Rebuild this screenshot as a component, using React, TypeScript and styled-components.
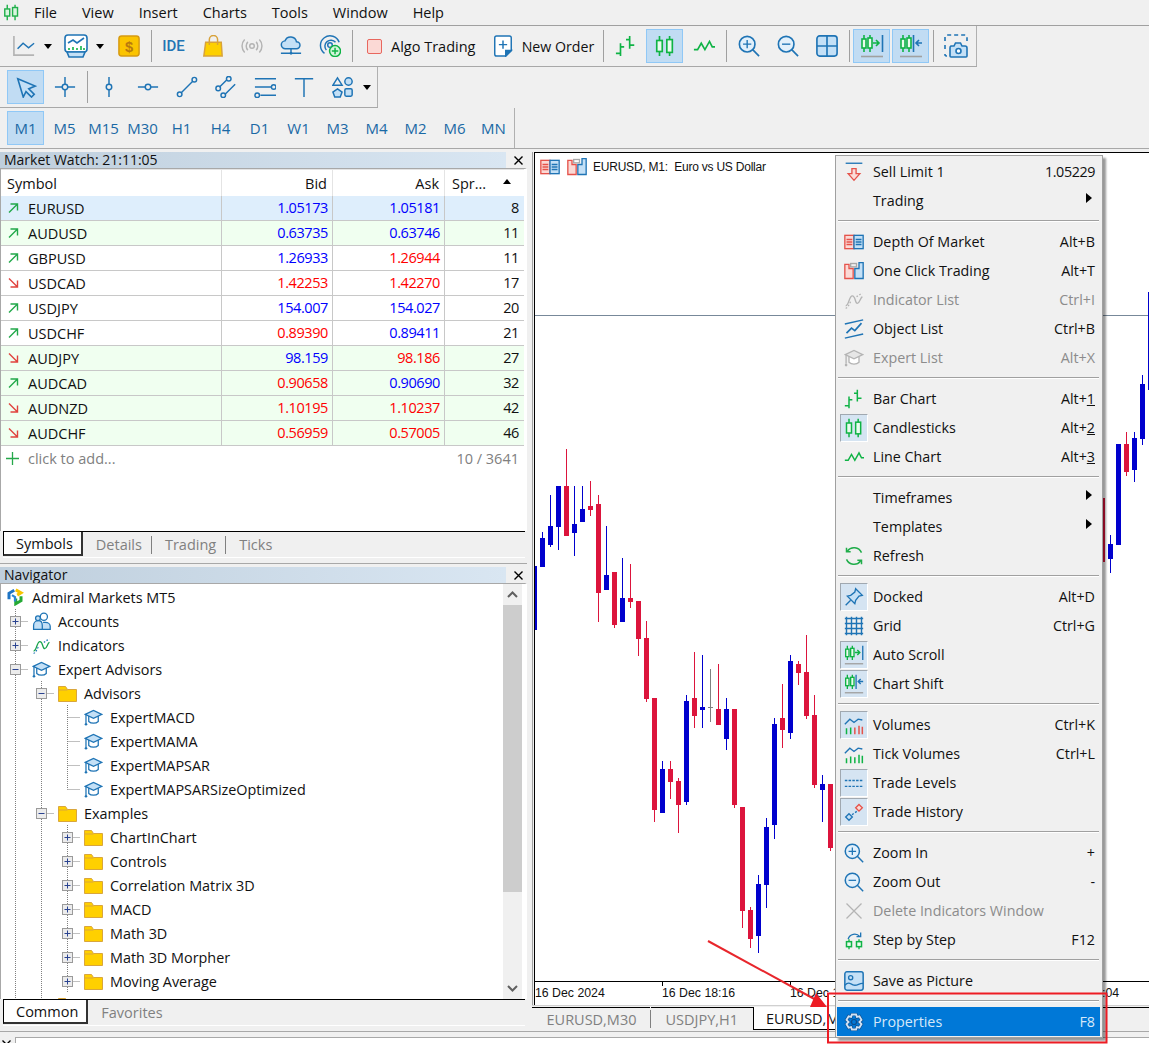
import React, { ReactNode } from 'react';
import styled, { createGlobalStyle } from 'styled-components';

const B = '#1f74b5';
const L = '#c4e0f6';
const G = '#0fb345';
const R = '#e5534b';
const GY = '#b4b4b4';
const FONT = `'Open Sans', 'Noto Sans', sans-serif`;

const GlobalStyle = createGlobalStyle`
    html, body { margin: 0; padding: 0; background: #fff; }
    body { font-family: ${FONT}; font-size: 14.5px; color: #111; }
`;

const Page = styled.div`
    position: relative;
    width: 1149px;
    height: 1064px;
    overflow: hidden;
    background: #fff;
`;

const Frame = styled.div`
    display: flex;
    flex-direction: column;
    height: 1043px;
    background: #f0f0f0;
`;

const MenuBar = styled.div`
    display: flex;
    align-items: center;
    height: 25px;
    padding-left: 3px;
    border-bottom: 1px solid #a0a0a0;
    box-sizing: content-box;
`;

const MenuLabels = styled.div`
    display: flex;
    gap: 25px;
    margin-left: 14px;
`;

const Toolbar = styled.div<{ $w: number; $pad: number }>`
    display: flex;
    align-items: center;
    width: ${(p) => p.$w}px;
    height: 40px;
    padding-left: ${(p) => p.$pad}px;
    box-sizing: border-box;
    border-right: 1px solid #b0b0b0;
    flex: none;
`;

const ToolRow = styled.div<{ $full?: boolean }>`
    border-bottom: 1px solid #a8a8a8;
    ${(p) => (p.$full ? '' : 'width: fit-content;')}
`;

const ToolButton = styled.div<{ $active?: boolean; $w?: number }>`
    display: flex;
    align-items: center;
    justify-content: center;
    gap: 8px;
    flex: none;
    width: ${(p) => p.$w ?? 37}px;
    height: 34px;
    margin: 0 1px;
    box-sizing: border-box;
    font-size: 14.2px;
    color: #111;
    background: ${(p) => (p.$active ? '#c1dcf3' : 'transparent')};
    border: 1px solid ${(p) => (p.$active ? '#90c8f6' : 'transparent')};
`;

const AlgoButton = styled(ToolButton)`
    justify-content: flex-start;
    gap: 9px;
    padding-left: 10px;
    font-size: 14.5px;
`;

const TimeframeButton = styled(ToolButton)`
    font-size: 15px;
    color: #1a69a5;
`;

const IdeLabel = styled.span`
    font-family: Roboto, sans-serif;
    font-weight: 500;
    font-size: 15px;
    color: #2374b4;
`;

const AlgoBox = styled.span`
    flex: none;
    width: 15px;
    height: 15px;
    box-sizing: border-box;
    border: 1px solid #e8675e;
    border-radius: 2px;
    background: #fbd9d5;
`;

const ToolSep = styled.div<{ $tight?: boolean }>`
    flex: none;
    width: 1px;
    height: 32px;
    margin: 0 ${(p) => (p.$tight ? '1px' : '2px')} 0 3px;
    background: #a0a0a0;
`;

const Caret = styled.div<{ $w: number }>`
    flex: none;
    width: ${(p) => p.$w}px;
    padding-left: 1px;
    box-sizing: border-box;
    &::before {
        content: '';
        display: block;
        width: 0;
        height: 0;
        border-left: 4.5px solid transparent;
        border-right: 4.5px solid transparent;
        border-top: 5px solid #000;
    }
`;

const Main = styled.div`
    display: flex;
    height: 882px;
    border-bottom: 1px solid #a8a8a8;
    flex: none;
`;

const LeftColumn = styled.div`
    width: 527px;
    padding-top: 3px;
    box-sizing: border-box;
    flex: none;
`;

const TitleBar = styled.div`
    display: flex;
    height: 16px;
`;

const TitleFill = styled.div`
    width: 506px;
    padding-left: 4px;
    box-sizing: border-box;
    line-height: 16px;
    font-size: 14px;
    background: linear-gradient(to right, #bfcfdd, #d9e6f2);
`;

const TitleClose = styled.div`
    flex: 1;
    display: flex;
    align-items: center;
    justify-content: center;
    padding-left: 3px;
`;

const WatchPanel = styled.div`
    height: 362px;
    box-sizing: content-box;
    border-top: 1px solid #a8a8a8;
    border-left: 1px solid #a8a8a8;
    border-right: 2px solid #fff;
    background: #fff;
    width: 524px;
`;

const watchColumns = '221px 111px 112px 79px';

const HeaderRow = styled.div`
    display: grid;
    grid-template-columns: ${watchColumns};
    height: 27px;
    align-items: stretch;
`;

const HeaderCell = styled.div<{ $right?: boolean }>`
    display: flex;
    align-items: center;
    justify-content: ${(p) => (p.$right ? 'flex-end' : 'flex-start')};
    padding: 0 5px 0 6px;
    border-right: 1px solid #e4e4e4;
    border-top: 1px solid #e4e4e4;
`;

const SpreadHeader = styled(HeaderCell)`
    justify-content: space-between;
    padding: 0 13px 0 7px;
    border-right: 0;
`;

const SortCaret = styled.div`
    width: 0;
    height: 0;
    margin-bottom: 3px;
    border-left: 4.5px solid transparent;
    border-right: 4.5px solid transparent;
    border-bottom: 5px solid #000;
`;

const QuoteRow = styled.div<{ $bg: string }>`
    display: grid;
    grid-template-columns: ${watchColumns};
    width: 523px;
    height: 25px;
    box-sizing: border-box;
    background: ${(p) => p.$bg};
    border-bottom: 1px solid #c8c8c8;
`;

const SymbolCell = styled.div`
    display: flex;
    align-items: center;
    gap: 9px;
    padding-left: 6px;
    border-right: 1px solid #c8c8c8;
`;

const PriceCell = styled.div<{ $color?: string; $last?: boolean }>`
    text-align: right;
    line-height: 24px;
    padding-right: 4px;
    letter-spacing: -0.4px;
    color: ${(p) => p.$color ?? '#111'};
    ${(p) => (p.$last ? 'padding-right: 5px;' : 'border-right: 1px solid #c8c8c8;')}
`;

const AddRow = styled.div`
    display: flex;
    align-items: center;
    justify-content: space-between;
    width: 523px;
    height: 25px;
    box-sizing: border-box;
    padding: 0 5px;
    color: #808080;
`;

const AddLabel = styled.span`
    display: flex;
    align-items: center;
    gap: 9px;
`;

const PaneTabs = styled.div`
    display: flex;
    height: 25px;
    margin-left: 3px;
    margin-right: 2px;
    border-top: 1px solid #000;
    border-bottom: 1px solid #fff;
    box-sizing: content-box;
`;

const PaneTab = styled.div<{ $active?: boolean }>`
    display: flex;
    align-items: center;
    padding: ${(p) => (p.$active ? '0 8px 0 12px' : '0 9px 0 13px')};
    height: 24px;
    box-sizing: border-box;
    color: ${(p) => (p.$active ? '#111' : '#808080')};
    background: ${(p) => (p.$active ? '#fff' : 'transparent')};
    ${(p) =>
        p.$active
            ? 'border-left: 1px solid #000; border-right: 2px solid #333; border-bottom: 2px solid #333;'
            : ''}
`;

const TabDivider = styled.div`
    align-self: center;
    width: 1px;
    height: 18px;
    background: #808080;
`;

const PaneDivider = styled.div`
    height: 1px;
    margin: 5px 0 3px;
    background: #a8a8a8;
`;

const NavigatorBody = styled.div`
    position: relative;
    display: flex;
    height: 415px;
    border-top: 1px solid #a8a8a8;
    border-left: 1px solid #a8a8a8;
    border-right: 2px solid #fff;
    background: #fff;
    overflow: hidden;
`;

const TreeList = styled.div`
    flex: 1;
    padding-top: 1px;
    font-size: 14.4px;
`;

const TreeRow = styled.div<{ $root?: boolean }>`
    display: flex;
    align-items: center;
    height: 24px;
    padding-left: ${(p) => (p.$root ? '5px' : '1px')};
`;

const TreeIcon = styled.span<{ $root?: boolean }>`
    display: flex;
    margin: ${(p) => (p.$root ? '0 8px 0 0' : '0 7px 0 4px')};
`;

const ScrollBar = styled.div`
    display: flex;
    flex-direction: column;
    align-items: center;
    width: 19px;
    margin-right: 3px;
    background: #f0f0f0;
`;

const ScrollCap = styled.div`
    display: flex;
    align-items: center;
    justify-content: center;
    height: 21px;
    flex: none;
`;

const ScrollThumb = styled.div`
    width: 100%;
    height: 287px;
    flex: none;
    background: #cdcdcd;
`;

const ScrollTrack = styled.div`
    flex: 1;
`;

const ChartColumn = styled.div`
    flex: 1;
    min-width: 0;
    padding-left: 5px;
`;

const ChartFrame = styled.div`
    margin-top: 3px;
    padding-left: 1px;
    border-left: 1px solid #a0a0a0;
    background: #f0f0f0;
`;

const ChartCanvas = styled.div`
    position: relative;
    height: 853px;
    box-sizing: border-box;
    border-left: 1px solid #000;
    border-top: 1px solid #000;
    background: #fff;
    overflow: hidden;
`;

const ChartSvg = styled.svg`
    display: block;
    width: 100%;
    height: 852px;
`;

const ChartLegend = styled.div`
    position: absolute;
    top: 4px;
    left: 5px;
    display: flex;
    align-items: center;
    gap: 6.500px;
    font-family: 'Liberation Sans', sans-serif;
    font-size: 12px;
    letter-spacing: -0.22px;
    white-space: pre;
`;

const AxisText = styled.text`
    font-family: 'Liberation Sans', sans-serif;
    font-size: 12.3px;
    fill: #111;
`;

const ChartTabs = styled.div`
    display: flex;
    height: 25px;
    padding-top: 1px;
    box-sizing: border-box;
    border-top: 1px solid #d0d0d0;
`;

const ChartTab = styled.div<{ $active?: boolean; $w: number }>`
    display: flex;
    align-items: center;
    flex: none;
    width: ${(p) => p.$w}px;
    padding-left: ${(p) => (p.$active ? '12px' : '14.500px')};
    box-sizing: border-box;
    color: ${(p) => (p.$active ? '#111' : '#808080')};
    background: ${(p) => (p.$active ? '#fff' : 'transparent')};
    ${(p) =>
        p.$active
            ? 'border-left: 1px solid #000; border-bottom: 1px solid #000;'
            : 'border-top: 1px solid #000;'}
`;

const ChartTabRest = styled.div`
    flex: 1;
    border-top: 1px solid #000;
`;

const StatusStrip = styled.div`
    display: flex;
    flex: none;
    height: 6px;
    margin-top: 5px;
    overflow: hidden;
`;

const StatusClose = styled.div`
    width: 15px;
    flex: none;
    padding: 3px 0 0 2px;
    box-sizing: border-box;
`;

const StatusBox = styled.div`
    flex: 1;
    background: #fff;
    border-top: 1px solid #a8a8a8;
    border-left: 1px solid #a8a8a8;
`;

const ContextMenu = styled.div`
    position: absolute;
    top: 155px;
    left: 835px;
    width: 268px;
    height: 883px;
    box-sizing: border-box;
    padding: 1px 2px 0 1px;
    font-size: 14.3px;
    background: #f0f0f0;
    border: 1px solid #a0a0a0;
    box-shadow: 3px 3px 2px rgba(0, 0, 0, 0.4);
`;

const MenuRow = styled.div<{ $selected?: boolean; $disabled?: boolean }>`
    display: flex;
    align-items: center;
    height: 29px;
    background: ${(p) => (p.$selected ? '#0078d7' : 'transparent')};
    color: ${(p) => (p.$selected ? '#d6e8f9' : p.$disabled ? '#8c8c8c' : '#111')};
`;

const MenuIconCell = styled.div<{ $checked?: boolean }>`
    display: flex;
    align-items: center;
    justify-content: center;
    flex: none;
    width: 28px;
    height: 28px;
    margin: 0 5px 0 3px;
    box-sizing: border-box;
    ${(p) =>
        p.$checked
            ? `background: #d5e4f2;
               border: 1px solid;
               border-color: #a0a8b0 #fff #fff #a0a8b0;`
            : ''}
`;

const MenuText = styled.span`
    flex: 1;
`;

const MenuShortcut = styled.span`
    padding-right: 5px;
`;

const MenuPrice = styled.span`
    letter-spacing: -0.4px;
`;

const SubArrow = styled.div`
    width: 0;
    height: 0;
    margin: 0 8px 5px 0;
    border-top: 5px solid transparent;
    border-bottom: 5px solid transparent;
    border-left: 6px solid #000;
`;

const MenuSeparator = styled.div`
    height: 1px;
    margin: 5px 1px 6px 1px;
    background: #a0a0a0;
    box-shadow: 0 1px 0 #fff;
`;

const Annotation = styled.svg`
    position: absolute;
    top: 0;
    left: 0;
    pointer-events: none;
`;

const Svg = styled.svg<{ $size: number }>`
    display: block;
    flex: none;
    width: ${(p) => p.$size}px;
    height: ${(p) => p.$size}px;
    fill: none;
    stroke-width: 1.6;
`;

const candlePair = (
    <>
        <path d="M6 1v22M17 1v22" stroke={G} strokeWidth="1.800" />
        <rect x="3" y="6" width="6" height="12" fill="#eafbee" stroke={G} strokeWidth="1.800" />
        <rect x="14" y="5" width="6" height="14" fill="#eafbee" stroke={G} strokeWidth="1.800" />
    </>
);

const hat = (stroke: string, fill: string) => (
    <>
        <path d="M6 10v7c3 3 9 3 12 0v-7" fill="#fff" stroke={stroke} />
        <path d="M1.500 8L12 3l10.500 5L12 13z" fill={fill} stroke={stroke} />
        <path d="M2.500 8v11" stroke={stroke} />
        <circle cx="2.500" cy="20.500" r="1.600" fill={stroke} />
    </>
);

const squiggle = (main: string, dash: string) => (
    <>
        <path d="M2 19c4 0 4-12 8-12s3 9 6 9 3-6 6-8" stroke={main} />
        <path d="M2 22c3-1 4-5 6-8M15 8c2-1 4-3 7-4" stroke={dash} strokeDasharray="2 2" />
    </>
);

const zoomBase = (
    <>
        <circle cx="10" cy="10" r="8.500" fill="#e2f0fb" stroke={B} strokeWidth="1.800" />
        <path d="M16 16l7 7" stroke={B} strokeWidth="1.800" />
    </>
);

const volumeLine = <path d="M1 11l6-6 5 4 5-4 5 1" stroke={B} />;

const gearOutline =
    'M9.500 3h5l1 3 3-.8 2.500 4.300L18.500 12l2.500 2.500-2.500 4.300-3-.8-1 3h-5l-1-3-3 .8L3 14.500 5.500 12 3 9.500l2.500-4.300 3 .8z';

const icons: Record<string, ReactNode> = {
    logo: (
        <>
            <path d="M6 1v22M17 1v22" stroke="#21b04b" strokeWidth="2" />
            <rect x="2.500" y="7" width="7" height="10" fill="#d9f5df" stroke="#21b04b" strokeWidth="2" />
            <rect x="13.500" y="5" width="7" height="12" fill="#d9f5df" stroke="#21b04b" strokeWidth="2" />
        </>
    ),
    lineChart: (
        <>
            <path d="M1 1v21h22" stroke={GY} strokeWidth="1.800" />
            <path d="M5 15l6-6 6 5 6-5" stroke={B} />
        </>
    ),
    monitor: (
        <>
            <rect x="1" y="1" width="22" height="17" rx="3" fill="#fff" stroke={B} />
            <path d="M4 9l5-3 4 3 7-5" stroke={B} />
            <path d="M5 16v-2M9 16v-3M13 16v-2M17 16v-4M20 16v-2" stroke={G} />
            <path d="M3 18l2 5h14l2-5z" fill={L} stroke={B} />
        </>
    ),
    dollar: (
        <>
            <rect x="1" y="1" width="22" height="22" rx="3" fill="#fbc400" stroke="#d69a12" />
            <text
                x="12"
                y="18"
                textAnchor="middle"
                fontFamily="Liberation Sans"
                fontSize="16"
                fontWeight="700"
                fill="#b8790f"
            >
                $
            </text>
        </>
    ),
    bag: (
        <>
            <path d="M4 8h17l1 15H2z" fill="#fdd000" stroke="#d8a23a" />
            <path d="M8 11V5a4.500 4.500 0 0 1 9 0v6" stroke="#d8a23a" />
        </>
    ),
    signal: (
        <>
            <circle cx="12" cy="12" r="2.500" stroke="#b4b4b4" />
            <path
                d="M7.500 7.500a6.500 6.500 0 0 0 0 9M16.500 7.500a6.500 6.500 0 0 1 0 9M4 5a10 10 0 0 0 0 14M20 5a10 10 0 0 1 0 14"
                stroke="#b4b4b4"
            />
        </>
    ),
    cloud: (
        <>
            <path d="M6 15a4.300 4.300 0 0 1-.5-8.600 6.500 6.500 0 0 1 12.500 1 3.800 3.800 0 0 1 0 7.600z" fill={L} stroke={B} />
            <path d="M12 15v5M1 20h22" stroke={B} />
            <circle cx="12" cy="20" r="1.500" fill={B} />
        </>
    ),
    radar: (
        <>
            <path d="M6 20A10.500 10.500 0 1 1 22 8" stroke={B} />
            <path d="M8 16.500A6.500 6.500 0 1 1 18 8" stroke={B} />
            <circle cx="12" cy="11" r="2.500" stroke={B} />
            <circle cx="17.500" cy="17.500" r="6" fill="#d5f5dc" stroke={G} />
            <path d="M17.500 14v7M14 17.500h7" stroke={G} />
        </>
    ),
    newOrder: (
        <>
            <path d="M3 3a2 2 0 0 1 2-2h14a2 2 0 0 1 2 2v14l-6 6H5a2 2 0 0 1-2-2z" fill="#fff" stroke={B} />
            <path d="M15 23l6-6h-6z" fill={B} stroke={B} />
            <path d="M12 6v9M7.500 10.500h9" stroke={B} />
        </>
    ),
    bars: <path d="M6 9v14M1 20h5M6 13h4M16 1v14M12 5h4M16 11h5" stroke={G} strokeWidth="1.800" />,
    candles: candlePair,
    wave: <path d="M1 16h4l4-7 4 7 5-9 3 6h3" stroke={G} strokeWidth="1.800" />,
    zoomIn: (
        <>
            {zoomBase}
            <path d="M10 5.500v9M5.500 10h9" stroke={B} strokeWidth="1.500" />
        </>
    ),
    zoomOut: (
        <>
            {zoomBase}
            <path d="M5.500 10h9" stroke={B} strokeWidth="1.500" />
        </>
    ),
    tile: (
        <>
            <rect x="1" y="1" width="22" height="22" rx="3" fill={L} stroke={B} strokeWidth="1.800" />
            <path d="M12 1v22M1 12h22" stroke={B} strokeWidth="1.800" />
        </>
    ),
    autoScroll: (
        <>
            <path d="M4 1v17M10 1v17" stroke={G} />
            <rect x="2" y="5" width="4" height="9" fill="#eafbee" stroke={G} />
            <rect x="8" y="4" width="4" height="10" fill="#eafbee" stroke={G} />
            <path d="M13 9h6M16 6l3 3-3 3" stroke={G} />
            <path d="M22.500 1v17" stroke={B} />
            <path d="M1 22.500h22" stroke="#a0a0a0" />
        </>
    ),
    chartShift: (
        <>
            <path d="M4 1v17M10 1v17" stroke={G} />
            <rect x="2" y="5" width="4" height="9" fill="#eafbee" stroke={G} />
            <rect x="8" y="4" width="4" height="10" fill="#eafbee" stroke={G} />
            <path d="M14.500 1v17" stroke={B} />
            <path d="M23 9h-6M20 6l-3 3 3 3" stroke={B} />
            <path d="M1 22.500h22" stroke="#a0a0a0" />
        </>
    ),
    camera: (
        <>
            <path
                d="M1 7V3a2 2 0 0 1 2-2h18a2 2 0 0 1 2 2v4M1 11v5M1 20v1a2 2 0 0 0 2 1"
                stroke={B}
                strokeDasharray="4 3"
            />
            <path
                d="M7 12h3l1.500-3h5L18 12h3a2 2 0 0 1 2 2v8a1 1 0 0 1-1 1H7a1 1 0 0 1-1-1v-8a2 2 0 0 1 1-2z"
                fill={L}
                stroke={B}
            />
            <circle cx="14.500" cy="17" r="2.500" fill="#fff" stroke={B} />
        </>
    ),
    cursor: <path d="M3 3l19 8-7 3 6 6-3 3-6-6-3 6z" fill={L} stroke={B} strokeWidth="1.700" />,
    cross: (
        <>
            <path d="M12 1v8M12 15v8M1 12h8M15 12h8" stroke={B} />
            <circle cx="12" cy="12" r="3" stroke={B} />
        </>
    ),
    vLine: (
        <>
            <path d="M12 1v8M12 15v8" stroke={B} />
            <circle cx="12" cy="12" r="3" stroke={B} />
        </>
    ),
    hLine: (
        <>
            <path d="M1 12h8M15 12h8" stroke={B} />
            <circle cx="12" cy="12" r="3" stroke={B} />
        </>
    ),
    trend: (
        <>
            <path d="M6 18L18 6" stroke={B} />
            <circle cx="4" cy="20" r="2.500" stroke={B} />
            <circle cx="20" cy="4" r="2.500" stroke={B} />
        </>
    ),
    parallel: (
        <>
            <path d="M5 12l8-8M11 20l11-11" stroke={B} />
            <circle cx="3.500" cy="13.500" r="2.500" stroke={B} />
            <circle cx="15" cy="3" r="2.500" stroke={B} />
            <circle cx="9" cy="21" r="2.500" stroke={B} />
        </>
    ),
    levels: (
        <>
            <path d="M1 3h23M1 12h18M7 21h17" stroke={B} />
            <circle cx="21.500" cy="12" r="2.500" stroke={B} />
            <circle cx="3.500" cy="21" r="2.500" stroke={B} />
        </>
    ),
    textTool: <path d="M2 3h20M12 3v20" stroke={B} />,
    shapes: (
        <>
            <path d="M6 2l5 8H1z" stroke={B} />
            <circle cx="18" cy="6" r="4" fill={L} stroke={B} />
            <path d="M6 14l5 3.500-2 5.500H3l-2-5.500z" fill={L} stroke={B} />
            <rect x="14" y="14" width="8" height="8" rx="1.500" fill={L} stroke={B} />
        </>
    ),
    sell: (
        <>
            <path d="M2 1.500h20" stroke={B} />
            <path d="M9.500 8h5v6h4.500l-7 8-7-8h4.500z" fill="#fbdcd8" stroke={R} />
        </>
    ),
    depth: (
        <>
            <rect x="1" y="4" width="11" height="16" fill="#fbd9d5" stroke={R} />
            <rect x="12" y="4" width="11" height="16" fill={L} stroke={B} />
            <path d="M3 9h7M3 12h7M3 15h7" stroke={R} />
            <path d="M14 9h7M14 12h7M14 15h7" stroke={B} />
        </>
    ),
    oneClick: (
        <>
            <path d="M1 4h5v5h5v12H1z" fill="#fbd9d5" stroke={R} />
            <path d="M23 2h-5v7h-5v12h10z" fill={L} stroke={B} />
            <rect x="8" y="3" width="7" height="4" stroke="#a8a8a8" />
        </>
    ),
    indicatorGray: squiggle('#b4b4b4', '#b4b4b4'),
    indicator: squiggle('#16a34a', B),
    objectList: (
        <>
            <path d="M1 6l22-5M1 23l22-5" stroke={B} />
            <path d="M3 17l6-6 4 3 8-9" stroke={B} strokeWidth="2" />
        </>
    ),
    hatGray: hat('#b4b4b4', '#e6e6e6'),
    hat: hat(B, L),
    refresh: (
        <>
            <path d="M21 8A10 10 0 0 0 4 6M3 16a10 10 0 0 0 17 2" stroke="#20ad4a" strokeWidth="1.800" />
            <path d="M3 2v5h5M21 22v-5h-5" stroke="#20ad4a" strokeWidth="1.800" />
        </>
    ),
    pin: (
        <>
            <path d="M14 2l8 8-4 1-4 5-1 4-9-9 4-1 5-4z" fill={L} stroke={B} />
            <path d="M8 16l-6 6" stroke={B} />
        </>
    ),
    grid: <path d="M1 3h22M1 9h22M1 15h22M1 21h22M3 1v22M9 1v22M15 1v22M21 1v22" stroke={B} strokeWidth="1.700" />,
    volumes: (
        <>
            {volumeLine}
            <path d="M3 23v-7M8 23v-8" stroke={G} strokeWidth="1.800" />
            <path d="M13 23v-8M18 23v-10M22 23v-9" stroke={R} strokeWidth="1.800" />
        </>
    ),
    tickVolumes: (
        <>
            {volumeLine}
            <path d="M3 23v-6M8 23v-8M13 23v-7M18 23v-10M22 23v-9" stroke={G} strokeWidth="1.800" />
        </>
    ),
    tradeLevels: <path d="M1 9h22M1 16h22" stroke={B} strokeDasharray="3 1.500" />,
    tradeHistory: (
        <>
            <path d="M6 18l11-8" stroke={B} strokeDasharray="2.500 2" />
            <path d="M6 14l4 4-4 4-4-4z" fill={L} stroke={B} />
            <path d="M18 3l4 4-4 4-4-4z" fill="#fbd9d5" stroke={R} />
        </>
    ),
    close: <path d="M3 3l18 18M21 3L3 21" stroke="#b4b4b4" strokeWidth="1.500" />,
    step: (
        <>
            <path d="M5 11a8 8 0 0 1 14-3M15 8h5V3" stroke={B} />
            <path d="M6 11v12M18 11v12" stroke={G} />
            <rect x="3" y="14" width="6" height="6" fill="#eafbee" stroke={G} strokeWidth="1.800" />
            <rect x="15" y="14" width="6" height="6" fill="#eafbee" stroke={G} strokeWidth="1.800" />
        </>
    ),
    picture: (
        <>
            <rect x="1" y="1" width="22" height="22" rx="2.500" fill={L} stroke={B} strokeWidth="1.800" />
            <circle cx="8" cy="8" r="2.500" stroke={B} />
            <path d="M1 17c5-5 7-1 11 0s7-3 11-2" stroke={B} />
        </>
    ),
    gear: (
        <>
            <path d={gearOutline} stroke="#0d4d8c" strokeWidth="3.800" />
            <path d={gearOutline} stroke="#cfe3f6" strokeWidth="2.200" />
            <circle cx="12" cy="12" r="3" stroke="#0d4d8c" strokeWidth="1.400" />
        </>
    ),
    accounts: (
        <>
            <circle cx="15" cy="6" r="4.500" fill="#fff" stroke={B} />
            <path d="M14 13h3c3 0 6 2 6 5v4H13" fill={L} stroke={B} />
            <path d="M2 17c0-4 3-6 6-6s5 2 5 6v5H2z" fill={L} stroke={B} />
            <circle cx="7.500" cy="8" r="3" fill={L} stroke={B} />
        </>
    ),
    brand: (
        <>
            <path d="M11 3L4 7v8" stroke="#1f74c4" strokeWidth="4" />
            <path d="M13 2.500l7 4-5 3" stroke="#f6c400" strokeWidth="4" />
            <path d="M20 11v6l-7 4v-7" stroke="#25a935" strokeWidth="4" />
            <path d="M8 9.500l4 2.500v6" stroke="#2a86d4" strokeWidth="3" />
        </>
    ),
};

const Icon = ({ name, size = 22 }: { name: string; size?: number }) => (
    <Svg $size={size} viewBox="0 0 24 24">
        {icons[name]}
    </Svg>
);

const FolderSvg = styled.svg`
    display: block;
    flex: none;
    width: 19px;
    height: 17px;
`;

const Folder = () => (
    <FolderSvg viewBox="0 0 19 17">
        <path d="M.5 16.500V1.500h7l2 3h9v12z" fill="#ffd000" stroke="#d9a63c" />
        <path d="M.5 5h9" stroke="#d9a63c" />
    </FolderSvg>
);

const QuoteArrow = ({ up }: { up: boolean }) => (
    <svg width="12" height="12" viewBox="0 0 12 12" fill="none" strokeWidth="1.400">
        {up ? (
            <path d="M2 10.500l8-8M3.500 2H10.500V8.500" stroke="#22a84a" />
        ) : (
            <path d="M2 1.500l8 8M3.500 10H10.500V3.500" stroke="#e0433e" />
        )}
    </svg>
);

const CloseGlyph = () => (
    <svg width="9" height="9" viewBox="0 0 9 9" fill="none" style={{ display: 'block' }}>
        <path d="M.5.500l8 8M8.500.500l-8 8" stroke="#000" strokeWidth="1.400" />
    </svg>
);

const Chevron = ({ up }: { up: boolean }) => (
    <svg width="11" height="7" viewBox="0 0 11 7" fill="none">
        <path d={up ? 'M1 6l4.500-4.500L10 6' : 'M1 1l4.500 4.500L10 1'} stroke="#606060" strokeWidth="2" />
    </svg>
);

type GuideKind = 'line' | 'plus' | 'minus' | 'tee' | 'elbow';

const Guide = ({ kind }: { kind: GuideKind }) => (
    <svg width="26" height="24" viewBox="0 0 26 24" fill="none" style={{ flex: 'none', display: 'block' }}>
        <path d={kind === 'elbow' ? 'M13.500 0V12.500' : 'M13.500 0V24'} stroke="#808080" strokeDasharray="1 1" />
        {kind !== 'line' && <path d="M13.500 12.500H26" stroke="#808080" strokeDasharray="1 1" />}
        {(kind === 'plus' || kind === 'minus') && (
            <>
                <rect x="8.500" y="7.500" width="10" height="10" fill="#ececec" stroke="#9a9a9a" />
                <path d="M10.500 12.500h6" stroke="#2a4390" />
                {kind === 'plus' && <path d="M13.500 9.500v6" stroke="#2a4390" />}
            </>
        )}
    </svg>
);

const watchRows: [string, boolean, string, string, string, string, string, string][] = [
    ['EURUSD', true, '1.05173', 'b', '1.05181', 'b', '8', '#deeefc'],
    ['AUDUSD', true, '0.63735', 'b', '0.63746', 'b', '11', '#f0fff0'],
    ['GBPUSD', true, '1.26933', 'b', '1.26944', 'r', '11', '#fff'],
    ['USDCAD', false, '1.42253', 'r', '1.42270', 'r', '17', '#fff'],
    ['USDJPY', true, '154.007', 'b', '154.027', 'b', '20', '#fff'],
    ['USDCHF', true, '0.89390', 'r', '0.89411', 'b', '21', '#fff'],
    ['AUDJPY', false, '98.159', 'b', '98.186', 'r', '27', '#f0fff0'],
    ['AUDCAD', true, '0.90658', 'r', '0.90690', 'b', '32', '#f0fff0'],
    ['AUDNZD', false, '1.10195', 'r', '1.10237', 'r', '42', '#f0fff0'],
    ['AUDCHF', false, '0.56959', 'r', '0.57005', 'r', '46', '#f0fff0'],
];

const priceColor = (c: string) => (c === 'b' ? '#0000ff' : '#ff0000');

type TreeItem = { guides: GuideKind[]; icon: string; label: string };

const expertGuides: GuideKind[] = ['line', 'line', 'tee'];
const exampleGuides: GuideKind[] = ['line', 'line', 'plus'];

const treeItems: TreeItem[] = [
    { guides: ['plus'], icon: 'accounts', label: 'Accounts' },
    { guides: ['plus'], icon: 'indicator', label: 'Indicators' },
    { guides: ['minus'], icon: 'hat', label: 'Expert Advisors' },
    { guides: ['line', 'minus'], icon: 'folder', label: 'Advisors' },
    { guides: expertGuides, icon: 'hat', label: 'ExpertMACD' },
    { guides: expertGuides, icon: 'hat', label: 'ExpertMAMA' },
    { guides: expertGuides, icon: 'hat', label: 'ExpertMAPSAR' },
    { guides: ['line', 'line', 'elbow'], icon: 'hat', label: 'ExpertMAPSARSizeOptimized' },
    { guides: ['line', 'minus'], icon: 'folder', label: 'Examples' },
    { guides: exampleGuides, icon: 'folder', label: 'ChartInChart' },
    { guides: exampleGuides, icon: 'folder', label: 'Controls' },
    { guides: exampleGuides, icon: 'folder', label: 'Correlation Matrix 3D' },
    { guides: exampleGuides, icon: 'folder', label: 'MACD' },
    { guides: exampleGuides, icon: 'folder', label: 'Math 3D' },
    { guides: exampleGuides, icon: 'folder', label: 'Math 3D Morpher' },
    { guides: exampleGuides, icon: 'folder', label: 'Moving Average' },
    { guides: ['line', 'line'], icon: 'folder', label: '' },
];

type MenuEntry =
    | 'sep'
    | {
          label: string;
          icon?: string;
          shortcut?: ReactNode;
          checked?: boolean;
          disabled?: boolean;
          submenu?: boolean;
          selected?: boolean;
      };

const menuEntries: MenuEntry[] = [
    { label: 'Sell Limit 1', icon: 'sell', shortcut: <MenuPrice>1.05229</MenuPrice> },
    { label: 'Trading', submenu: true },
    'sep',
    { label: 'Depth Of Market', icon: 'depth', shortcut: 'Alt+B' },
    { label: 'One Click Trading', icon: 'oneClick', shortcut: 'Alt+T' },
    { label: 'Indicator List', icon: 'indicatorGray', shortcut: 'Ctrl+I', disabled: true },
    { label: 'Object List', icon: 'objectList', shortcut: 'Ctrl+B' },
    { label: 'Expert List', icon: 'hatGray', shortcut: 'Alt+X', disabled: true },
    'sep',
    { label: 'Bar Chart', icon: 'bars', shortcut: <>Alt+<u>1</u></> },
    { label: 'Candlesticks', icon: 'candles', shortcut: <>Alt+<u>2</u></>, checked: true },
    { label: 'Line Chart', icon: 'wave', shortcut: <>Alt+<u>3</u></> },
    'sep',
    { label: 'Timeframes', submenu: true },
    { label: 'Templates', submenu: true },
    { label: 'Refresh', icon: 'refresh' },
    'sep',
    { label: 'Docked', icon: 'pin', shortcut: 'Alt+D', checked: true },
    { label: 'Grid', icon: 'grid', shortcut: 'Ctrl+G' },
    { label: 'Auto Scroll', icon: 'autoScroll', checked: true },
    { label: 'Chart Shift', icon: 'chartShift', checked: true },
    'sep',
    { label: 'Volumes', icon: 'volumes', shortcut: 'Ctrl+K', checked: true },
    { label: 'Tick Volumes', icon: 'tickVolumes', shortcut: 'Ctrl+L' },
    { label: 'Trade Levels', icon: 'tradeLevels', checked: true },
    { label: 'Trade History', icon: 'tradeHistory', checked: true },
    'sep',
    { label: 'Zoom In', icon: 'zoomIn', shortcut: '+' },
    { label: 'Zoom Out', icon: 'zoomOut', shortcut: '-' },
    { label: 'Delete Indicators Window', icon: 'close', disabled: true },
    { label: 'Step by Step', icon: 'step', shortcut: 'F12' },
    'sep',
    { label: 'Save as Picture', icon: 'picture' },
    'sep',
    { label: 'Properties', icon: 'gear', shortcut: 'F8', selected: true },
];

// index on the 8px candle grid, high, body top, body bottom, low, colour
type Candle = [number, number, number, number, number, 'u' | 'd' | 'n'];

const candles: Candle[] = [
    [0, 566, 566, 630, 630, 'u'],
    [1, 532, 538, 567, 567, 'u'],
    [2, 495, 526, 545, 547, 'u'],
    [3, 486, 486, 527, 550, 'u'],
    [4, 449, 486, 536, 536, 'd'],
    [5, 486, 524, 533, 556, 'u'],
    [6, 486, 509, 522, 522, 'u'],
    [7, 481, 506, 510, 516, 'd'],
    [8, 495, 504, 593, 622, 'd'],
    [9, 526, 575, 590, 590, 'u'],
    [10, 572, 572, 625, 628, 'd'],
    [11, 558, 598, 622, 622, 'u'],
    [12, 564, 598, 602, 608, 'd'],
    [13, 601, 601, 639, 656, 'd'],
    [14, 621, 638, 699, 702, 'd'],
    [15, 698, 698, 810, 822, 'd'],
    [16, 761, 769, 813, 813, 'u'],
    [17, 761, 769, 782, 799, 'd'],
    [18, 778, 781, 805, 833, 'd'],
    [19, 695, 701, 802, 805, 'u'],
    [20, 652, 698, 716, 728, 'd'],
    [21, 655, 707, 710, 728, 'u'],
    [22, 669, 707, 708, 722, 'n'],
    [23, 664, 709, 725, 725, 'd'],
    [24, 698, 709, 739, 750, 'u'],
    [25, 709, 709, 805, 808, 'd'],
    [26, 807, 807, 911, 928, 'd'],
    [27, 907, 910, 939, 948, 'd'],
    [28, 875, 884, 936, 953, 'u'],
    [29, 818, 827, 885, 908, 'u'],
    [30, 718, 724, 825, 839, 'u'],
    [31, 684, 718, 730, 748, 'd'],
    [32, 655, 661, 733, 739, 'u'],
    [33, 661, 664, 673, 685, 'd'],
    [34, 635, 672, 716, 719, 'd'],
    [35, 695, 715, 785, 788, 'd'],
    [36, 775, 784, 790, 822, 'u'],
    [37, 784, 784, 848, 851, 'd'],
    [71, 498, 498, 562, 562, 'd'],
    [72, 535, 544, 559, 573, 'u'],
    [73, 444, 444, 545, 545, 'u'],
    [74, 432, 444, 472, 476, 'd'],
    [75, 432, 438, 470, 482, 'u'],
    [76, 375, 384, 439, 445, 'u'],
    [77, 292, 292, 390, 390, 'u'],
];

const candleColor = { u: '#0000cd', d: '#dc143c', n: '#808080' };

const axisLabels: [number, string][] = [
    [535, '16 Dec 2024'],
    [662, '16 Dec 18:16'],
    [790, '16 Dec 18:32'],
    [1046, '16 Dec 19:04'],
];

const timeframes = ['M1', 'M5', 'M15', 'M30', 'H1', 'H4', 'D1', 'W1', 'M3', 'M4', 'M2', 'M6', 'MN'];

const PriceChart = () => (
    <ChartSvg viewBox="535 153 614 852" shapeRendering="crispEdges">
        <path d="M535 315.500H1149" stroke="#778899" />
        {candles.map(([i, high, top, bottom, low, kind]) => {
            const x = 532 + i * 8;
            return (
                <g key={i} fill={candleColor[kind]}>
                    <rect x={x + 2} y={high} width="1" height={low - high} />
                    <rect x={x} y={top} width="5" height={bottom - top} />
                </g>
            );
        })}
        <path d="M535 981.500H1149" stroke="#000" />
        {axisLabels.map(([x, text]) => (
            <g key={x}>
                {x > 535 && <path d={`M${x + 0.5} 981V986`} stroke="#000" />}
                <AxisText x={x} y={997} shapeRendering="auto">
                    {text}
                </AxisText>
            </g>
        ))}
    </ChartSvg>
);

const App = () => (
    <Page>
        <GlobalStyle />
        <Frame>
            <MenuBar>
                <Icon name="logo" size={17} />
                <MenuLabels>
                    {['File', 'View', 'Insert', 'Charts', 'Tools', 'Window', 'Help'].map((m) => (
                        <span key={m}>{m}</span>
                    ))}
                </MenuLabels>
            </MenuBar>

            <ToolRow>
                <Toolbar $w={977} $pad={4}>
                    <ToolButton><Icon name="lineChart" /></ToolButton>
                    <Caret $w={13} />
                    <ToolButton><Icon name="monitor" size={24} /></ToolButton>
                    <Caret $w={14} />
                    <ToolButton><Icon name="dollar" /></ToolButton>
                    <ToolSep />
                    <ToolButton><IdeLabel>IDE</IdeLabel></ToolButton>
                    <ToolButton><Icon name="bag" /></ToolButton>
                    <ToolButton><Icon name="signal" /></ToolButton>
                    <ToolButton><Icon name="cloud" /></ToolButton>
                    <ToolButton><Icon name="radar" /></ToolButton>
                    <ToolSep />
                    <AlgoButton $w={129}>
                        <AlgoBox />
                        Algo Trading
                    </AlgoButton>
                    <ToolButton $w={112}>
                        <Icon name="newOrder" />
                        New Order
                    </ToolButton>
                    <ToolSep />
                    <ToolButton><Icon name="bars" /></ToolButton>
                    <ToolButton $active><Icon name="candles" /></ToolButton>
                    <ToolButton><Icon name="wave" /></ToolButton>
                    <ToolSep />
                    <ToolButton><Icon name="zoomIn" /></ToolButton>
                    <ToolButton><Icon name="zoomOut" /></ToolButton>
                    <ToolButton><Icon name="tile" /></ToolButton>
                    <ToolSep />
                    <ToolButton $active><Icon name="autoScroll" size={24} /></ToolButton>
                    <ToolButton $active><Icon name="chartShift" size={24} /></ToolButton>
                    <ToolSep />
                    <ToolButton><Icon name="camera" size={24} /></ToolButton>
                </Toolbar>
            </ToolRow>

            <ToolRow>
                <Toolbar $w={378} $pad={6}>
                    <ToolButton $active><Icon name="cursor" /></ToolButton>
                    <ToolButton><Icon name="cross" /></ToolButton>
                    <ToolSep $tight />
                    <ToolButton><Icon name="vLine" /></ToolButton>
                    <ToolButton><Icon name="hLine" /></ToolButton>
                    <ToolButton><Icon name="trend" /></ToolButton>
                    <ToolButton><Icon name="parallel" /></ToolButton>
                    <ToolButton><Icon name="levels" /></ToolButton>
                    <ToolButton><Icon name="textTool" /></ToolButton>
                    <ToolButton><Icon name="shapes" /></ToolButton>
                    <Caret $w={12} />
                </Toolbar>
            </ToolRow>

            <ToolRow $full>
                <Toolbar $w={515} $pad={6}>
                    {timeframes.map((t, i) => (
                        <TimeframeButton key={t} $active={i === 0}>{t}</TimeframeButton>
                    ))}
                </Toolbar>
            </ToolRow>

            <Main>
                <LeftColumn>
                    <TitleBar>
                        <TitleFill>Market Watch: 21:11:05</TitleFill>
                        <TitleClose><CloseGlyph /></TitleClose>
                    </TitleBar>
                    <WatchPanel>
                        <HeaderRow>
                            <HeaderCell>Symbol</HeaderCell>
                            <HeaderCell $right>Bid</HeaderCell>
                            <HeaderCell $right>Ask</HeaderCell>
                            <SpreadHeader>Spr...<SortCaret /></SpreadHeader>
                        </HeaderRow>
                        {watchRows.map(([symbol, up, bid, bidC, ask, askC, spread, bg]) => (
                            <QuoteRow key={symbol} $bg={bg}>
                                <SymbolCell>
                                    <QuoteArrow up={up} />
                                    {symbol}
                                </SymbolCell>
                                <PriceCell $color={priceColor(bidC)}>{bid}</PriceCell>
                                <PriceCell $color={priceColor(askC)}>{ask}</PriceCell>
                                <PriceCell $last>{spread}</PriceCell>
                            </QuoteRow>
                        ))}
                        <AddRow>
                            <AddLabel>
                                <svg width="13" height="13" viewBox="0 0 13 13" fill="none">
                                    <path d="M6.500 0v13M0 6.500h13" stroke="#25a84a" strokeWidth="1.300" />
                                </svg>
                                click to add...
                            </AddLabel>
                            <span>10 / 3641</span>
                        </AddRow>
                    </WatchPanel>
                    <PaneTabs>
                        <PaneTab $active>Symbols</PaneTab>
                        <PaneTab>Details</PaneTab>
                        <TabDivider />
                        <PaneTab>Trading</PaneTab>
                        <TabDivider />
                        <PaneTab>Ticks</PaneTab>
                    </PaneTabs>
                    <PaneDivider />
                    <TitleBar>
                        <TitleFill>Navigator</TitleFill>
                        <TitleClose><CloseGlyph /></TitleClose>
                    </TitleBar>
                    <NavigatorBody>
                        <TreeList>
                            <TreeRow $root>
                                <TreeIcon $root><Icon name="brand" size={18} /></TreeIcon>
                                Admiral Markets MT5
                            </TreeRow>
                            {treeItems.map((item, i) => (
                                <TreeRow key={i}>
                                    {item.guides.map((g, j) => <Guide key={j} kind={g} />)}
                                    <TreeIcon>
                                        {item.icon === 'folder' ? <Folder /> : <Icon name={item.icon} size={19} />}
                                    </TreeIcon>
                                    {item.label}
                                </TreeRow>
                            ))}
                        </TreeList>
                        <ScrollBar>
                            <ScrollCap><Chevron up /></ScrollCap>
                            <ScrollThumb />
                            <ScrollTrack />
                            <ScrollCap><Chevron up={false} /></ScrollCap>
                        </ScrollBar>
                    </NavigatorBody>
                    <PaneTabs>
                        <PaneTab $active>Common</PaneTab>
                        <PaneTab>Favorites</PaneTab>
                    </PaneTabs>
                </LeftColumn>

                <ChartColumn>
                    <ChartFrame>
                        <ChartCanvas>
                            <PriceChart />
                            <ChartLegend>
                                <Icon name="depth" size={20} />
                                <Icon name="oneClick" size={20} />
                                {'EURUSD, M1:  Euro vs US Dollar'}
                            </ChartLegend>
                        </ChartCanvas>
                    </ChartFrame>
                    <ChartTabs>
                        <ChartTab $w={118}>EURUSD,M30</ChartTab>
                        <TabDivider />
                        <ChartTab $w={102}>USDJPY,H1</ChartTab>
                        <ChartTab $active $w={97}>EURUSD,M1</ChartTab>
                        <ChartTabRest />
                    </ChartTabs>
                </ChartColumn>
            </Main>

            <StatusStrip>
                <StatusClose><CloseGlyph /></StatusClose>
                <StatusBox />
            </StatusStrip>
        </Frame>

        <ContextMenu>
            {menuEntries.map((entry, i) =>
                entry === 'sep' ? (
                    <MenuSeparator key={i} />
                ) : (
                    <MenuRow key={i} $selected={entry.selected} $disabled={entry.disabled}>
                        <MenuIconCell $checked={entry.checked}>
                            {entry.icon && <Icon name={entry.icon} size={20} />}
                        </MenuIconCell>
                        <MenuText>{entry.label}</MenuText>
                        {entry.shortcut && <MenuShortcut>{entry.shortcut}</MenuShortcut>}
                        {entry.submenu && <SubArrow />}
                    </MenuRow>
                ),
            )}
        </ContextMenu>

        <Annotation width="1149" height="1064" viewBox="0 0 1149 1064" fill="none">
            <path d="M708 941L818 1001" stroke="#e8262c" strokeWidth="2" />
            <path d="M827 1007L816 993L810 1007Z" fill="#ed1c24" />
            <rect x="828" y="993.500" width="278.500" height="49" stroke="#ed1c24" strokeWidth="2" />
        </Annotation>
    </Page>
);

export default App;
